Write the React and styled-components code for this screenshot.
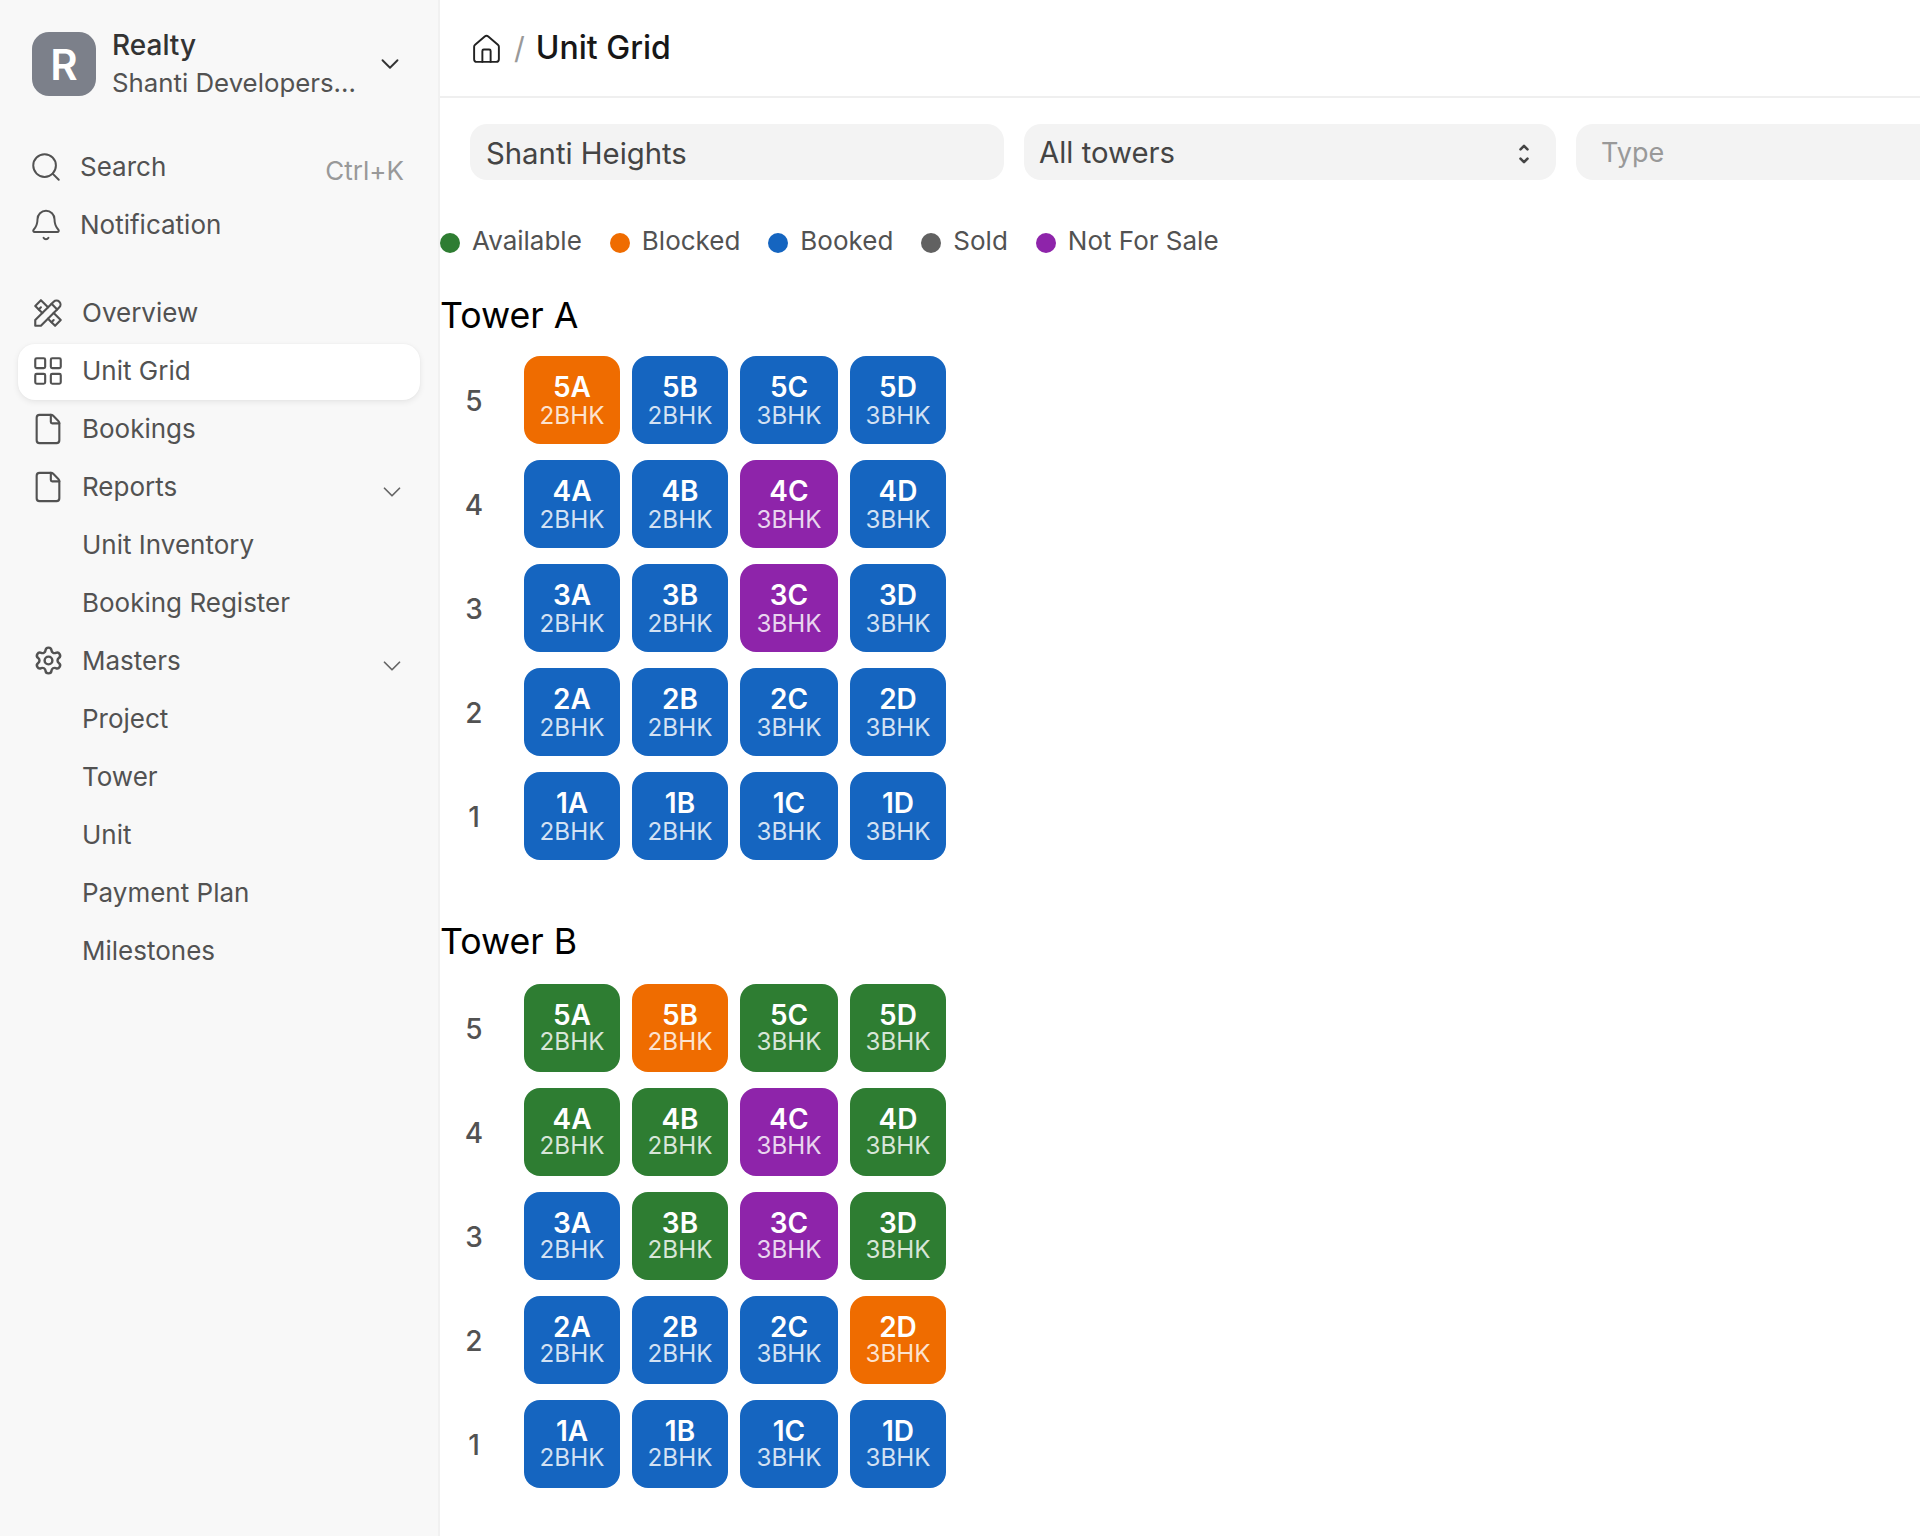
import React from 'react';
import styled, { createGlobalStyle } from 'styled-components';
import { Search, Bell, LayoutGrid, File, Settings, ChevronDown, Home } from 'lucide-react';
import { TbTools } from 'react-icons/tb';

const STATUS = {
  A: '#2e7d32',
  O: '#ef6c00',
  B: '#1565c0',
  S: '#616161',
  P: '#8e24aa',
};

const LEGEND = [
  ['Available', 'A'],
  ['Blocked', 'O'],
  ['Booked', 'B'],
  ['Sold', 'S'],
  ['Not For Sale', 'P'],
];

const TOWERS = [
  {
    name: 'Tower A',
    titleGap: 19,
    compact: false,
    rows: ['OBBB', 'BBPB', 'BBPB', 'BBBB', 'BBBB'],
  },
  {
    name: 'Tower B',
    titleGap: 21,
    compact: true,
    rows: ['AOAA', 'AAPA', 'BAPA', 'BBBO', 'BBBB'],
  },
];

const COLS = ['A', 'B', 'C', 'D'];
const TYPES = ['2BHK', '2BHK', '3BHK', '3BHK'];

export default function App() {
  return (
    <Page>
      <GlobalStyle />
      <Sidebar>
        <Brand>
          <Avatar>R</Avatar>
          <BrandText>
            <BrandName>Realty</BrandName>
            <BrandSub>Shanti Developers...</BrandSub>
          </BrandText>
          <ChevronDown size={30} strokeWidth={1.5} color="#333" />
        </Brand>

        <TopLinks>
          <TopLink>
            <Search size={34} strokeWidth={1.4} />
            <TopLabel>Search</TopLabel>
            <Shortcut>Ctrl+K</Shortcut>
          </TopLink>
          <TopLink>
            <Bell size={34} strokeWidth={1.4} />
            <TopLabel>Notification</TopLabel>
          </TopLink>
        </TopLinks>

        <Nav>
          <NavItem><IconSlot><TbTools size={34} strokeWidth={1.5} /></IconSlot>Overview</NavItem>
          <NavItem $active><IconSlot><LayoutGrid size={34} strokeWidth={1.5} /></IconSlot>Unit Grid</NavItem>
          <NavItem><IconSlot><File size={34} strokeWidth={1.5} /></IconSlot>Bookings</NavItem>
          <NavItem>
            <IconSlot><File size={34} strokeWidth={1.5} /></IconSlot>Reports
            <NavChevron><ChevronDown size={30} strokeWidth={1.4} /></NavChevron>
          </NavItem>
          <NavItem><IconSlot />Unit Inventory</NavItem>
          <NavItem><IconSlot />Booking Register</NavItem>
          <NavItem>
            <IconSlot><Settings size={31} strokeWidth={1.9} /></IconSlot>Masters
            <NavChevron><ChevronDown size={30} strokeWidth={1.4} /></NavChevron>
          </NavItem>
          <NavItem><IconSlot />Project</NavItem>
          <NavItem><IconSlot />Tower</NavItem>
          <NavItem><IconSlot />Unit</NavItem>
          <NavItem><IconSlot />Payment Plan</NavItem>
          <NavItem><IconSlot />Milestones</NavItem>
        </Nav>
      </Sidebar>

      <Main>
        <Header>
          <HomeIcon><Home size={33} strokeWidth={1.4} color="#222" /></HomeIcon>
          <Slash>/</Slash>
          <Crumb>Unit Grid</Crumb>
        </Header>

        <Filters>
          <Field $width={534}><InputValue>Shanti Heights</InputValue></Field>
          <Field $width={532}>
            All towers
            <SelectArrows viewBox="0 0 12 20" fill="none" stroke="#444" strokeWidth="2.2" strokeLinecap="round" strokeLinejoin="round">
              <path d="M3 6l3-3 3 3" />
              <path d="M3 14l3 3 3-3" />
            </SelectArrows>
          </Field>
          <Field $width={532} $placeholder>Type</Field>
        </Filters>

        <Legend>
          {LEGEND.map(([label, key]) => (
            <LegendItem key={label}>
              <Dot $color={STATUS[key]} />
              {label}
            </LegendItem>
          ))}
        </Legend>

        {TOWERS.map((tower) => (
          <Tower key={tower.name}>
            <TowerTitle $gap={tower.titleGap}>{tower.name}</TowerTitle>
            <Floors>
              {tower.rows.map((row, i) => {
                const floor = tower.rows.length - i;
                return (
                  <Floor key={floor}>
                    <FloorLabel>{floor}</FloorLabel>
                    <Units>
                      {COLS.map((col, c) => (
                        <UnitCard key={col} $color={STATUS[row[c]]}>
                          <UnitName $compact={tower.compact}>{floor}{col}</UnitName>
                          <UnitType $compact={tower.compact}>{TYPES[c]}</UnitType>
                        </UnitCard>
                      ))}
                    </Units>
                  </Floor>
                );
              })}
            </Floors>
          </Tower>
        ))}
      </Main>
    </Page>
  );
}

const GlobalStyle = createGlobalStyle`
  html, body {
    margin: 0;
    padding: 0;
    background: #fff;
    font-family: Inter, "Liberation Sans", sans-serif;
  }
  * { box-sizing: border-box; }
`;

const Page = styled.div`
  display: flex;
  width: 1920px;
  height: 1536px;
  overflow: hidden;
`;

const Sidebar = styled.aside`
  width: 440px;
  flex-shrink: 0;
  background: #f8f8f8;
  border-right: 2px solid #f1f1f1;
  padding: 32px 18px 0;
  color: #525252;
`;

const Brand = styled.div`
  display: flex;
  align-items: center;
  height: 64px;
  padding-left: 14px;
  padding-right: 15px;
`;

const Avatar = styled.div`
  width: 64px;
  height: 64px;
  border-radius: 17px;
  background: #7c808a;
  color: #fff;
  font-size: 42px;
  font-weight: 600;
  display: flex;
  align-items: center;
  justify-content: center;
  flex-shrink: 0;
`;

const BrandText = styled.div`
  flex: 1;
  margin-left: 16px;
  display: flex;
  flex-direction: column;
  gap: 3px;
`;

const BrandName = styled.div`
  font-size: 28px;
  line-height: 34px;
  font-weight: 500;
  color: #333;
`;

const BrandSub = styled.div`
  font-size: 25.8px;
  line-height: 35px;
  color: #525252;
  white-space: nowrap;
`;

const TopLinks = styled.div`
  margin-top: 43px;
  display: flex;
  flex-direction: column;
  gap: 2px;
`;

const TopLink = styled.div`
  display: flex;
  align-items: center;
  height: 56px;
  padding-left: 11px;
  padding-right: 16px;
  gap: 17px;
  font-size: 26px;
`;

const TopLabel = styled.span`
  margin-bottom: 2px;
`;

const Shortcut = styled.span`
  margin-left: auto;
  margin-top: 6px;
  color: #999;
  font-size: 26px;
`;

const Nav = styled.nav`
  margin-top: 33px;
  display: flex;
  flex-direction: column;
  gap: 2px;
`;

const NavItem = styled.div`
  display: flex;
  align-items: center;
  height: 56px;
  padding: 0 13px 3px 13px;
  font-size: 26px;
  border-radius: 17px;
  background: ${(p) => (p.$active ? '#fff' : 'transparent')};
  box-shadow: ${(p) => (p.$active ? '0 2px 6px rgba(0, 0, 0, 0.08), 0 0 2px rgba(0, 0, 0, 0.04)' : 'none')};
`;

const IconSlot = styled.span`
  width: 34px;
  margin-right: 17px;
  flex-shrink: 0;
  display: flex;
  align-items: center;
  justify-content: center;
`;

const NavChevron = styled.span`
  margin-left: auto;
  margin-top: 10px;
  display: flex;
  color: #666;
`;

const Main = styled.main`
  flex: 1;
  min-width: 0;
`;

const Header = styled.header`
  height: 98px;
  display: flex;
  align-items: center;
  padding-left: 30px;
  border-bottom: 2px solid #efefef;
`;

const HomeIcon = styled.span`
  display: flex;
  margin-top: 3px;
`;

const Slash = styled.span`
  margin: 0 11px;
  font-size: 30px;
  color: #999;
`;

const Crumb = styled.span`
  font-size: 32px;
  font-weight: 500;
  color: #171717;
  margin-bottom: 2px;
`;

const Filters = styled.div`
  display: flex;
  gap: 20px;
  margin-top: 26px;
  padding-left: 30px;
`;

const Field = styled.div`
  position: relative;
  width: ${(p) => p.$width}px;
  height: 56px;
  flex-shrink: 0;
  display: flex;
  align-items: center;
  padding-left: ${(p) => (p.$placeholder ? '25px' : '15px')};
  border-radius: 17px;
  background: #f3f3f3;
  font-size: ${(p) => (p.$placeholder ? '27px' : '29.3px')};
  color: ${(p) => (p.$placeholder ? '#999' : '#444')};
`;

const InputValue = styled.span`
  margin: 3px 0 0 1px;
`;

const SelectArrows = styled.svg`
  position: absolute;
  right: 25px;
  top: 18px;
  width: 14px;
  height: 24px;
`;

const Legend = styled.div`
  display: flex;
  align-items: center;
  gap: 28px;
  margin-top: 40px;
  height: 40px;
`;

const LegendItem = styled.div`
  display: flex;
  align-items: center;
  gap: 12px;
  font-size: 26px;
  color: #525252;
`;

const Dot = styled.span`
  width: 20px;
  height: 20px;
  margin-top: 6px;
  border-radius: 50%;
  background: ${(p) => p.$color};
`;

const Tower = styled.section`
  margin-bottom: 60px;
`;

const TowerTitle = styled.h2`
  margin: 34px 0 ${(p) => p.$gap}px;
  font-size: 35.7px;
  line-height: 43px;
  font-weight: 400;
  color: #000;
`;

const Floors = styled.div`
  display: flex;
  flex-direction: column;
  gap: 16px;
`;

const Floor = styled.div`
  display: flex;
  align-items: center;
  gap: 16px;
`;

const FloorLabel = styled.div`
  width: 68px;
  margin-top: 2px;
  text-align: center;
  font-size: 28px;
  font-weight: 500;
  color: #525252;
`;

const Units = styled.div`
  display: grid;
  grid-template-columns: 96px 96px 98px 96px;
  gap: 12px;
`;

const UnitCard = styled.div`
  height: 88px;
  border-radius: 16px;
  background: ${(p) => p.$color};
  color: #fff;
  display: flex;
  flex-direction: column;
  align-items: center;
  justify-content: center;
`;

const UnitName = styled.div`
  padding-top: ${(p) => (p.$compact ? '2px' : '1px')};
  font-size: 28px;
  line-height: ${(p) => (p.$compact ? '28px' : '30px')};
  font-weight: 600;
`;

const UnitType = styled.div`
  padding-bottom: ${(p) => (p.$compact ? '3px' : '0')};
  font-size: 24.2px;
  line-height: ${(p) => (p.$compact ? '25px' : '27px')};
  color: rgba(255, 255, 255, 0.82);
`;
